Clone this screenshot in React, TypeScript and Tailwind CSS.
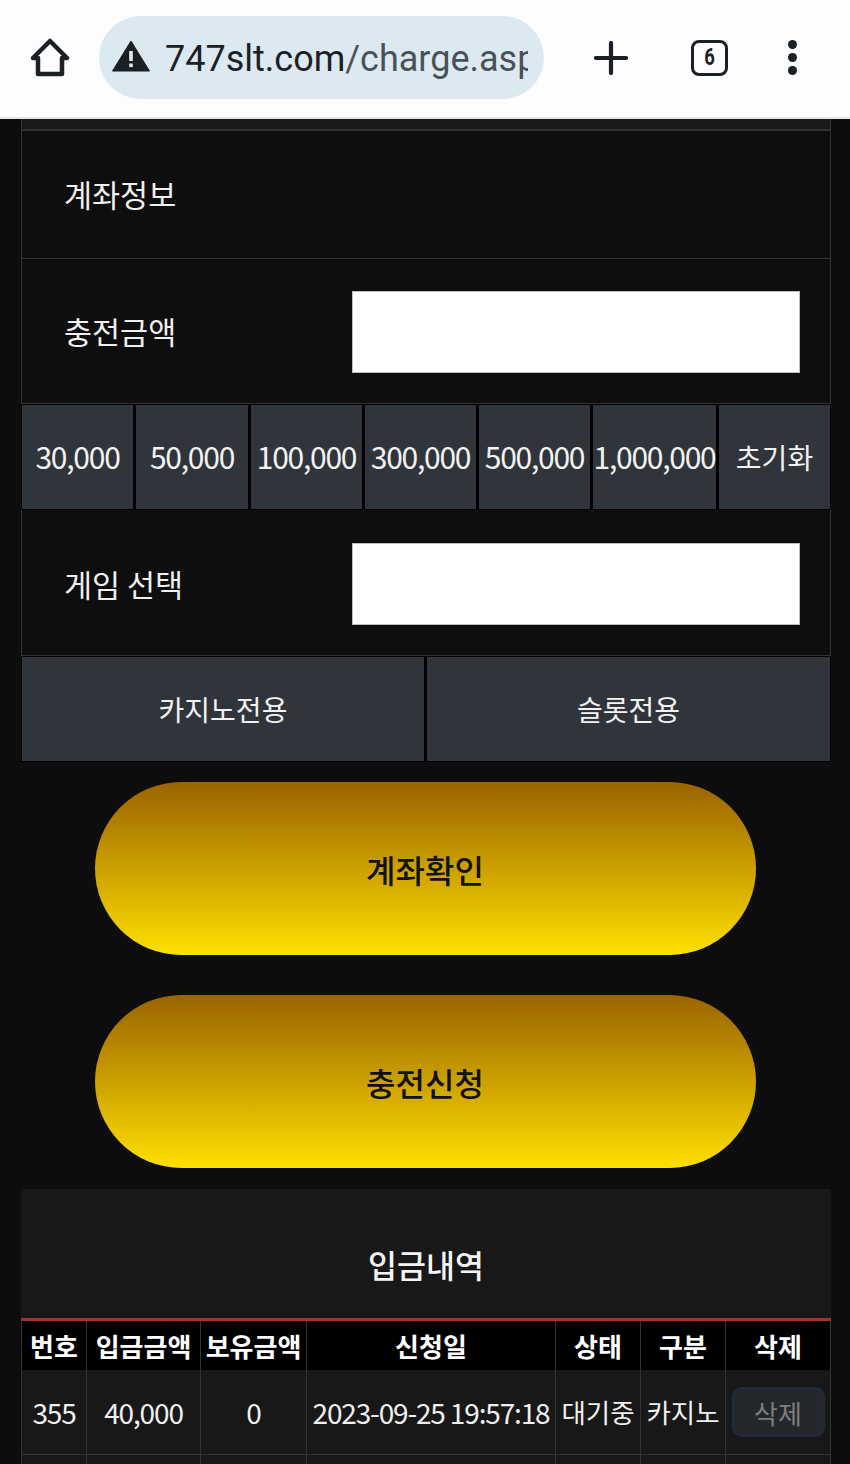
import { ReactNode } from 'react';

const FONT = "font-['Noto_Sans_CJK_KR','Noto_Sans',sans-serif]";

const AMOUNTS = [
  { label: '30,000', width: 'w-[111px]', text: 'pb-[2px] text-[30px] tracking-[-1.25px]' },
  { label: '50,000', width: 'w-[112px]', text: 'pb-[2px] text-[30px] tracking-[-1.25px]' },
  { label: '100,000', width: 'w-[111px]', text: 'pb-[2px] text-[30px] tracking-[-1.25px]' },
  { label: '300,000', width: 'w-[111px]', text: 'pb-[2px] text-[30px] tracking-[-1.25px]' },
  { label: '500,000', width: 'w-[111px]', text: 'pb-[2px] text-[30px] tracking-[-1.25px]' },
  { label: '1,000,000', width: 'w-[123px]', text: 'pb-[2px] text-[30px] tracking-[-1.25px]' },
  { label: '초기화', width: 'flex-1', text: 'text-[28px]' },
];

const COLS = [
  { title: '번호', width: 'w-[66px] border-l', value: '355', text: 'text-[28px] tracking-[-1.15px]' },
  { title: '입금금액', width: 'w-[114px]', value: '40,000', text: 'text-[28px] tracking-[-1.15px]' },
  { title: '보유금액', width: 'w-[106px]', value: '0', text: 'text-[28px] tracking-[-1.15px]' },
  { title: '신청일', width: 'w-[249px]', value: '2023-09-25 19:57:18', text: 'text-[28px] tracking-[-1.15px]' },
  { title: '상태', width: 'w-[85px]', value: '대기중', text: 'text-[26.5px]' },
  { title: '구분', width: 'w-[85px]', value: '카지노', text: 'text-[26.5px]' },
];

function BrowserBar() {
  return (
    <div className="flex h-[119px] items-center border-b-2 border-[#e4e6e8] bg-[#fdfdff] pb-[2px]">
      <svg className="ml-[30px] h-[40px] w-[40px]" viewBox="0 0 40 40" fill="none" stroke="#1b2025" strokeWidth="4.5" strokeLinejoin="round">
        <path d="M20 3 L37 20 L32 20 L32 36 L8 36 L8 20 L3 20 Z" />
      </svg>
      <div className="ml-[29px] flex h-[83px] w-[445px] items-center rounded-[42px] bg-[#dde9f1] pl-[13px] pr-[16px]">
        <svg className="mb-[4px] h-[32px] w-[38px] shrink-0" viewBox="0 0 38 32">
          <path d="M19 1 L37.5 31 L0.5 31 Z" fill="#1b2025" stroke="#1b2025" strokeWidth="1" strokeLinejoin="round" />
          <rect x="17.2" y="11" width="3.6" height="10" fill="#dde9f1" />
          <rect x="17.2" y="23.5" width="3.6" height="3.6" fill="#dde9f1" />
        </svg>
        <div className="ml-[15px] mt-[2px] overflow-hidden whitespace-nowrap font-['Roboto',sans-serif] text-[36px] leading-[44px] text-[#1b2025]">
          747slt.com<span className="text-[#4a5158]">/charge.aspx</span>
        </div>
      </div>
      <svg className="ml-[50px] h-[34px] w-[34px]" viewBox="0 0 34 34" stroke="#1b2025" strokeWidth="4.2" strokeLinecap="round">
        <path d="M17 2 V32 M2 17 H32" />
      </svg>
      <div className="ml-[63px] flex h-[36px] w-[37px] items-center justify-center rounded-[8px] border-[3.5px] border-[#1b2025] font-['Roboto',sans-serif] text-[23px] font-bold leading-none text-[#1b2025]">
        <span className="scale-x-[0.8]">6</span>
      </div>
      <div className="ml-[60px] flex flex-col gap-[4px]">
        <span className="h-[9px] w-[9px] rounded-full bg-[#1b2025]" />
        <span className="h-[9px] w-[9px] rounded-full bg-[#1b2025]" />
        <span className="h-[9px] w-[9px] rounded-full bg-[#1b2025]" />
      </div>
    </div>
  );
}

function FormRow({ label, children, height }: { label: string; children?: ReactNode; height: string }) {
  return (
    <div className={`flex items-center justify-between border-x border-b border-[#333] bg-[#0e0e0e] pl-[42px] pr-[30px] ${height}`}>
      <span className="text-[30.5px] leading-none text-[#f0f0f0]">{label}</span>
      {children}
    </div>
  );
}

function AmountInput() {
  return <div className="h-[82px] w-[448px] border border-[#bdbdbd] bg-white" />;
}

function GoldButton({ label }: { label: string }) {
  return (
    <div className="flex h-[173px] w-[661px] items-center justify-center rounded-[87px] bg-gradient-to-b from-[#9a6400] to-[#ffe000] text-[32px] font-medium text-[#111]">
      {label}
    </div>
  );
}

export default function App() {
  return (
    <div className={`h-[1464px] w-[850px] overflow-hidden bg-[#0d0d0d] ${FONT}`}>
      <BrowserBar />

      <div className="mx-[21px] w-[810px]">
        <div className="h-[12px] border-x border-b-2 border-[#333] bg-[#1a1a1a]" />
        <FormRow label="계좌정보" height="h-[128px]" />
        <FormRow label="충전금액" height="h-[145px] pt-[1px]">
          <AmountInput />
        </FormRow>

        <div className="flex h-[106px] gap-[3px] bg-black px-[1px] py-[1px]">
          {AMOUNTS.map((a) => (
            <div key={a.label} className={`flex items-center justify-center whitespace-nowrap bg-[#30353c] text-[#f2f2f2] ${a.width} ${a.text}`}>
              {a.label}
            </div>
          ))}
        </div>

        <FormRow label="게임 선택" height="h-[146px] pt-[3px]">
          <AmountInput />
        </FormRow>

        <div className="flex h-[106px] gap-[3px] bg-black px-[1px] py-[1px]">
          <div className="flex w-[402px] items-center justify-center bg-[#30353c] text-[28px] text-[#f2f2f2]">카지노전용</div>
          <div className="flex flex-1 items-center justify-center bg-[#30353c] text-[28px] text-[#f2f2f2]">슬롯전용</div>
        </div>
      </div>

      <div className="mt-[20px] flex flex-col items-center gap-[40px]">
        <GoldButton label="계좌확인" />
        <GoldButton label="충전신청" />
      </div>

      <div className="mx-[21px] mt-[21px] w-[810px] bg-[#181818]">
        <div className="flex h-[129px] items-center justify-center pt-[22px] text-[31.5px] font-medium text-[#f5f5f5]">입금내역</div>
        <div className="h-[3px] bg-[#a8302f]" />

        <div className="flex h-[49px] bg-black text-[26px] font-bold text-white">
          {COLS.map((c) => (
            <div key={c.title} className={`flex items-center justify-center border-r border-[#333] ${c.width}`}>
              {c.title}
            </div>
          ))}
          <div className="flex flex-1 items-center justify-center border-r border-[#333]">삭제</div>
        </div>

        <div className="flex h-[85px] border-b border-[#333] text-[#f0f0f0]">
          {COLS.map((c) => (
            <div key={c.title} className={`flex items-center justify-center whitespace-nowrap border-r border-[#333] ${c.width} ${c.text}`}>
              {c.value}
            </div>
          ))}
          <div className="flex flex-1 items-center justify-center border-r border-[#333]">
            <div className="flex h-[50px] w-[93px] items-center justify-center rounded-[10px] border-2 border-[#1f2c3c] bg-[#24272c] text-[26px] text-[#7d7d7d]">
              삭제
            </div>
          </div>
        </div>
        <div className="flex h-[20px]">
          {COLS.map((c) => (
            <div key={c.title} className={`border-r border-[#333] ${c.width}`} />
          ))}
          <div className="flex-1 border-r border-[#333]" />
        </div>
      </div>
    </div>
  );
}
